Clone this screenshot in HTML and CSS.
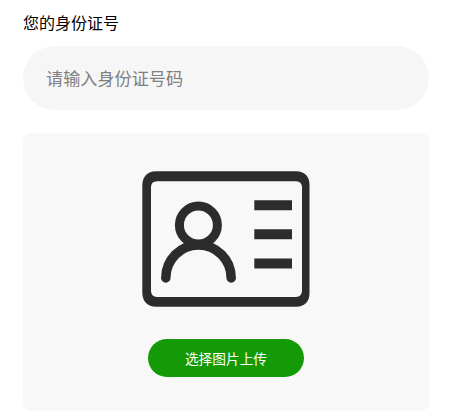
FILE: index.html
```html
<!DOCTYPE html>
<html lang="zh-CN">
<head>
<meta charset="utf-8">
<title>身份证</title>
<link rel="stylesheet" href="styles.css">
</head>
<body>
<main class="form">
  <label class="label" for="idno">您的身份证号</label>
  <input class="field" id="idno" type="text" placeholder="请输入身份证号码">
  <section class="upload">
    <svg class="card-icon" viewBox="0 0 168 138" width="168" height="138" fill="none" stroke="#2c2c2c" stroke-width="9">
      <path fill="#2c2c2c" stroke="none" fill-rule="evenodd" d="M14 1.300H154Q167.500 2 167.500 15V123Q167.500 136 154 136.800H14Q.8 136 .3 123V15Q.8 2 14 1.300ZM15 11.200Q9 11.500 9 17V121Q9 126.500 15 127H154Q159.800 126.500 160 121V17Q159.800 11.500 154 11.200Z"/>
      <circle cx="56.400" cy="55" r="19"/>
      <path d="M23.800 108A32.700 33 0 0 1 89.200 108" stroke-width="9.500" stroke-linecap="round"/>
      <path d="M112.300 35.200H150M112.300 64.300H150M112.300 93.400H150" stroke-width="10"/>
    </svg>
    <button class="button" type="button">选择图片上传</button>
  </section>
</main>
</body>
</html>
```
FILE: styles.css
```css
* { box-sizing: border-box; }
body {
  margin: 0;
  background: #fff;
  font-family: "Noto Sans CJK SC", sans-serif;
}
.form {
  display: flex;
  flex-direction: column;
  padding: 10px 21px 0 23px;
}
.label {
  font-size: 16px;
  line-height: 24px;
  color: #000;
}
.field {
  height: 64px;
  margin-top: 12px;
  padding: 0 23px 1px;
  border: 0;
  border-radius: 32px;
  background: #f6f6f6;
  font-family: inherit;
  font-size: 17.150px;
  outline: none;
}
.field::placeholder { color: #808080; }
.upload {
  display: flex;
  flex-direction: column;
  align-items: center;
  height: 278px;
  margin-top: 23px;
  padding-top: 37px;
  border-radius: 8px;
  background: #f8f8f8;
}
.card-icon { display: block; }
.button {
  width: 156px;
  height: 38px;
  margin-top: 31px;
  padding: 0;
  border: 0;
  border-radius: 19px;
  background: #149a07;
  color: #fff;
  font-family: inherit;
  font-size: 13.700px;
}
```
